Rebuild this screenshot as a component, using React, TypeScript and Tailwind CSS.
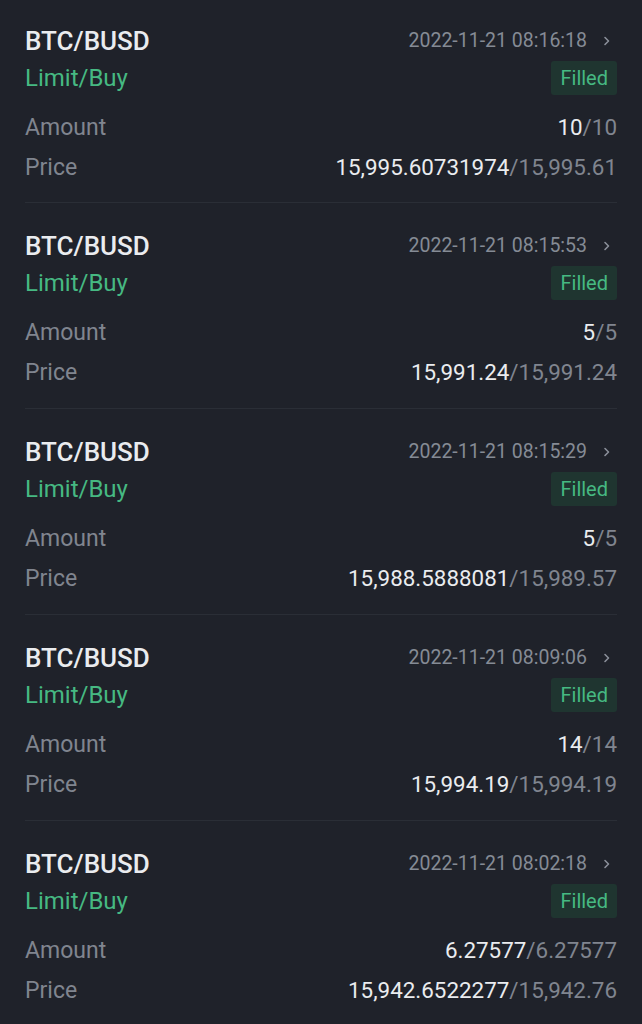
import React from "react";

type Order = {
  date: string;
  filled: string;
  amount: string;
  avg: string;
  price: string;
};

const orders: Order[] = [
  { date: "2022-11-21 08:16:18", filled: "10", amount: "10", avg: "15,995.60731974", price: "15,995.61" },
  { date: "2022-11-21 08:15:53", filled: "5", amount: "5", avg: "15,991.24", price: "15,991.24" },
  { date: "2022-11-21 08:15:29", filled: "5", amount: "5", avg: "15,988.5888081", price: "15,989.57" },
  { date: "2022-11-21 08:09:06", filled: "14", amount: "14", avg: "15,994.19", price: "15,994.19" },
  { date: "2022-11-21 08:02:18", filled: "6.27577", amount: "6.27577", avg: "15,942.6522277", price: "15,942.76" },
];

function Chevron() {
  return (
    <svg width="8" height="10" viewBox="0 0 8 10" className="ml-[16px] mr-[6px]" fill="none">
      <path d="M2 1.5 L5.5 5 L2 8.5" stroke="#8a8f99" strokeWidth="1.6" strokeLinecap="round" strokeLinejoin="round" />
    </svg>
  );
}

function Card({ o, first }: { o: Order; first: boolean }) {
  return (
    <div className={`${first ? "pt-[24px] pb-[14px]" : "pt-[26px] pb-[15px]"} border-b border-[#2a2e36]`}>
      <div className="h-[34px] flex items-center justify-between">
        <span className="text-[26px] font-medium text-[#eaecef]">BTC/BUSD</span>
        <span className="flex items-center text-[19.5px] text-[#858b95]">
          {o.date}
          <Chevron />
        </span>
      </div>
      <div className="h-[40px] flex items-center justify-between">
        <span className="text-[24px] text-[#46b982]">Limit/Buy</span>
        <span className="h-[34px] px-[9px] flex items-center rounded-[3px] bg-[#1f3530] text-[20px] text-[#46b982]">Filled</span>
      </div>
      <div className="mt-[10px] h-[40px] flex items-center justify-between">
        <span className="text-[23px] text-[#80858f]">Amount</span>
        <span className="text-[22.4px]">
          <span className="text-[#eaecef]">{o.filled}</span>
          <span className="text-[#80858f]">/{o.amount}</span>
        </span>
      </div>
      <div className="h-[40px] flex items-center justify-between">
        <span className="text-[23px] text-[#80858f]">Price</span>
        <span className="text-[22.4px]">
          <span className="text-[#eaecef]">{o.avg}</span>
          <span className="text-[#80858f]">/{o.price}</span>
        </span>
      </div>
    </div>
  );
}

export default function App() {
  return (
    <div className="w-[642px] h-[1024px] overflow-hidden bg-[#1f222a] px-[25px]" style={{ fontFamily: "Roboto, 'Noto Sans', sans-serif" }}>
      {orders.map((o, i) => (
        <Card key={i} o={o} first={i === 0} />
      ))}
    </div>
  );
}
